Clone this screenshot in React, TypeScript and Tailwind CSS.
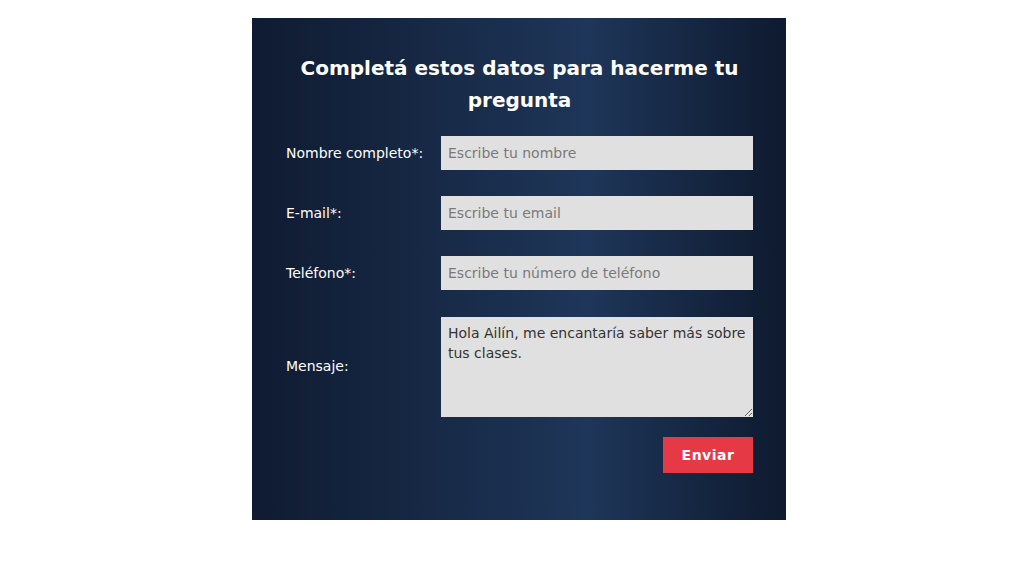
export default function App() {
  const font = { fontFamily: '"DejaVu Sans", "Noto Sans", sans-serif' };

  return (
    <div className="min-h-screen bg-white" style={font}>
      <div className="ml-[252px] pt-[18px]">
        <form className="w-[534px] h-[502px] bg-gradient-to-r from-[#0f1b31] via-[#1e3659] via-[63%] to-[#0e1a2f] pl-[34px] pr-[33px] pt-[34px]">
          <h2 className="text-center text-white font-bold text-[20px] leading-[32px]">
            Completá estos datos para hacerme tu pregunta
          </h2>

          <div className="mt-[20px] grid grid-cols-[155px_312px] items-center gap-y-[26px] text-[14px]">
            <label className="text-white">Nombre completo*:</label>
            <input
              className="h-[34px] bg-[#e0e0e0] px-[7px] text-[#333] placeholder:text-[#7a7a7a] outline-none"
              placeholder="Escribe tu nombre"
            />

            <label className="text-white">E-mail*:</label>
            <input
              className="h-[34px] bg-[#e0e0e0] px-[7px] text-[#333] placeholder:text-[#7a7a7a] outline-none"
              placeholder="Escribe tu email"
            />

            <label className="text-white">Teléfono*:</label>
            <input
              className="h-[34px] bg-[#e0e0e0] px-[7px] text-[#333] placeholder:text-[#7a7a7a] outline-none"
              placeholder="Escribe tu número de teléfono"
            />

            <label className="text-white">Mensaje:</label>
            <textarea
              className="h-[100px] bg-[#e0e0e0] px-[7px] py-[6px] text-[#333] leading-[20px] outline-none mt-px"
              defaultValue="Hola Ailín, me encantaría saber más sobre tus clases."
            />
          </div>

          <div className="mt-[20px] flex justify-end">
            <button
              type="button"
              className="w-[90px] h-[36px] bg-[#e63946] text-white font-bold text-[14px] tracking-[0.5px]"
            >
              Enviar
            </button>
          </div>
        </form>
      </div>
    </div>
  );
}
